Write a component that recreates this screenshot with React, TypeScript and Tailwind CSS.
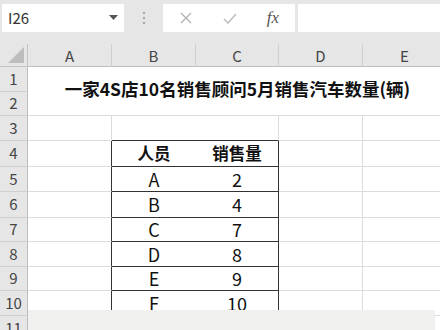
import React from "react";

const cols = ["A", "B", "C", "D", "E"];
const rowH = [25, 24, 25, 26, 25, 26, 24, 25, 24, 25, 25];
const data: [string, string][] = [
  ["A", "2"],
  ["B", "4"],
  ["C", "7"],
  ["D", "8"],
  ["E", "9"],
  ["F", "10"],
];

const cjk = { fontFamily: '"Noto Sans CJK SC", "Noto Sans", sans-serif' };

function Toolbar() {
  return (
    <div className="flex h-[44px] items-start gap-0 bg-[#e6e6e6] pt-[4px]">
      {/* 名称框 */}
      <div className="ml-[2px] flex h-[28px] w-[122px] items-center justify-between bg-white pl-[6px] pr-[6px]">
        <span className="text-[15px] text-[#333]" style={cjk}>
          I26
        </span>
        <svg width="9" height="6" viewBox="0 0 9 6">
          <path d="M0 0h9L4.5 5z" fill="#555" />
        </svg>
      </div>
      <div className="flex h-[28px] w-[39px] items-center justify-center">
        <svg width="4" height="14" viewBox="0 0 4 14">
          <circle cx="2" cy="2" r="1.2" fill="#aaa" />
          <circle cx="2" cy="7" r="1.2" fill="#aaa" />
          <circle cx="2" cy="12" r="1.2" fill="#aaa" />
        </svg>
      </div>
      {/* 取消 / 确认 / 函数 */}
      <div className="flex h-[28px] w-[132px] items-center bg-white">
        <div className="flex w-[44px] justify-center pl-[2px]">
          <svg width="12" height="12" viewBox="0 0 12 12">
            <path d="M1 1l10 10M11 1L1 11" stroke="#b0b0b0" strokeWidth="1.3" />
          </svg>
        </div>
        <div className="flex w-[44px] justify-center pl-[2px]">
          <svg width="14" height="11" viewBox="0 0 14 11">
            <path d="M1 6l4 4L13 1" stroke="#c0c0c0" strokeWidth="1.6" fill="none" />
          </svg>
        </div>
        <div className="flex w-[44px] justify-center">
          <span className="text-[17px] italic text-[#555]" style={{ fontFamily: '"Liberation Serif", serif' }}>
            fx
          </span>
        </div>
      </div>
      <div className="ml-[3px] h-[28px] flex-1 bg-white" />
    </div>
  );
}

function Sheet() {
  const hdr = "flex items-center justify-center bg-[#e6e6e6] text-[15px] text-[#444]";
  const grid = "border-b border-r border-[#dcdcdc] bg-white";
  const cells: React.ReactNode[] = [];

  // 列标题
  cells.push(
    <div key="corner" className="relative border-b border-r border-[#c4c4c4] bg-[#e6e6e6]">
      <svg className="absolute bottom-[3px] right-[3px]" width="16" height="16" viewBox="0 0 16 16">
        <path d="M16 0V16H0z" fill="#bdbdbd" />
      </svg>
    </div>
  );
  cols.forEach((c) =>
    cells.push(
      <div key={"h" + c} className={`${hdr} border-b border-r border-b-[#bdbdbd] border-r-[#cfcfcf] pt-[3px]`} style={cjk}>
        {c}
      </div>
    )
  );

  for (let r = 1; r <= 11; r++) {
    cells.push(
      <div key={"r" + r} className={`${hdr} border-b border-r border-b-[#d0d0d0] border-r-[#bdbdbd]`} style={cjk}>
        {r}
      </div>
    );
    if (r === 1) {
      cells.push(
        <div
          key="title"
          className="col-span-5 row-span-2 flex items-center justify-center border-b border-[#dcdcdc] bg-white pb-[5px] text-[17.5px] font-bold leading-none text-[#111]"
          style={cjk}
        >
          一家4S店10名销售顾问5月销售汽车数量(辆)
        </div>
      );
      continue;
    }
    if (r === 2) continue;
    const inTable = r >= 4 && r <= 10;
    const item = data[r - 5];
    cells.push(
      <div key={"a" + r} className={`border-b border-r border-b-[#dcdcdc] bg-white ${inTable ? "border-r-[#333]" : "border-r-[#dcdcdc]"}`} />
    );
    const bd = r >= 3 && r <= 10 ? "border-b-[#333]" : "border-b-[#dcdcdc]";
    const rb = inTable ? "border-r-[#333]" : "border-r-[#dcdcdc]";
    const txt = r === 4 ? "font-bold text-[16.5px]" : "text-[18px]";
    cells.push(
      <div key={"b" + r} className={`flex items-center justify-center border-b bg-white text-[#111] ${bd} ${txt}`} style={cjk}>
        {r === 4 ? "人员" : item ? item[0] : ""}
      </div>
    );
    cells.push(
      <div key={"c" + r} className={`flex items-center justify-center border-b border-r bg-white text-[#111] ${bd} ${rb} ${txt}`} style={cjk}>
        {r === 4 ? "销售量" : item ? item[1] : ""}
      </div>
    );
    cells.push(<div key={"d" + r} className={grid} />);
    cells.push(<div key={"e" + r} className={grid} />);
  }

  return (
    <div className="relative">
      <div
        className="grid grid-cols-[28px_84px_84px_83px_84px_84px]"
        style={{ gridTemplateRows: ["23px", ...rowH.map((h) => h + "px")].join(" ") }}
      >
        {cells}
      </div>
      {/* 底部工作表栏遮挡 */}
      <div className="absolute left-[28px] right-[5px] top-[266px] h-[40px] bg-[#f0f0ef]" />
    </div>
  );
}

export default function App() {
  return (
    <div className="h-[330px] w-[440px] overflow-hidden bg-white">
      <Toolbar />
      <Sheet />
    </div>
  );
}
